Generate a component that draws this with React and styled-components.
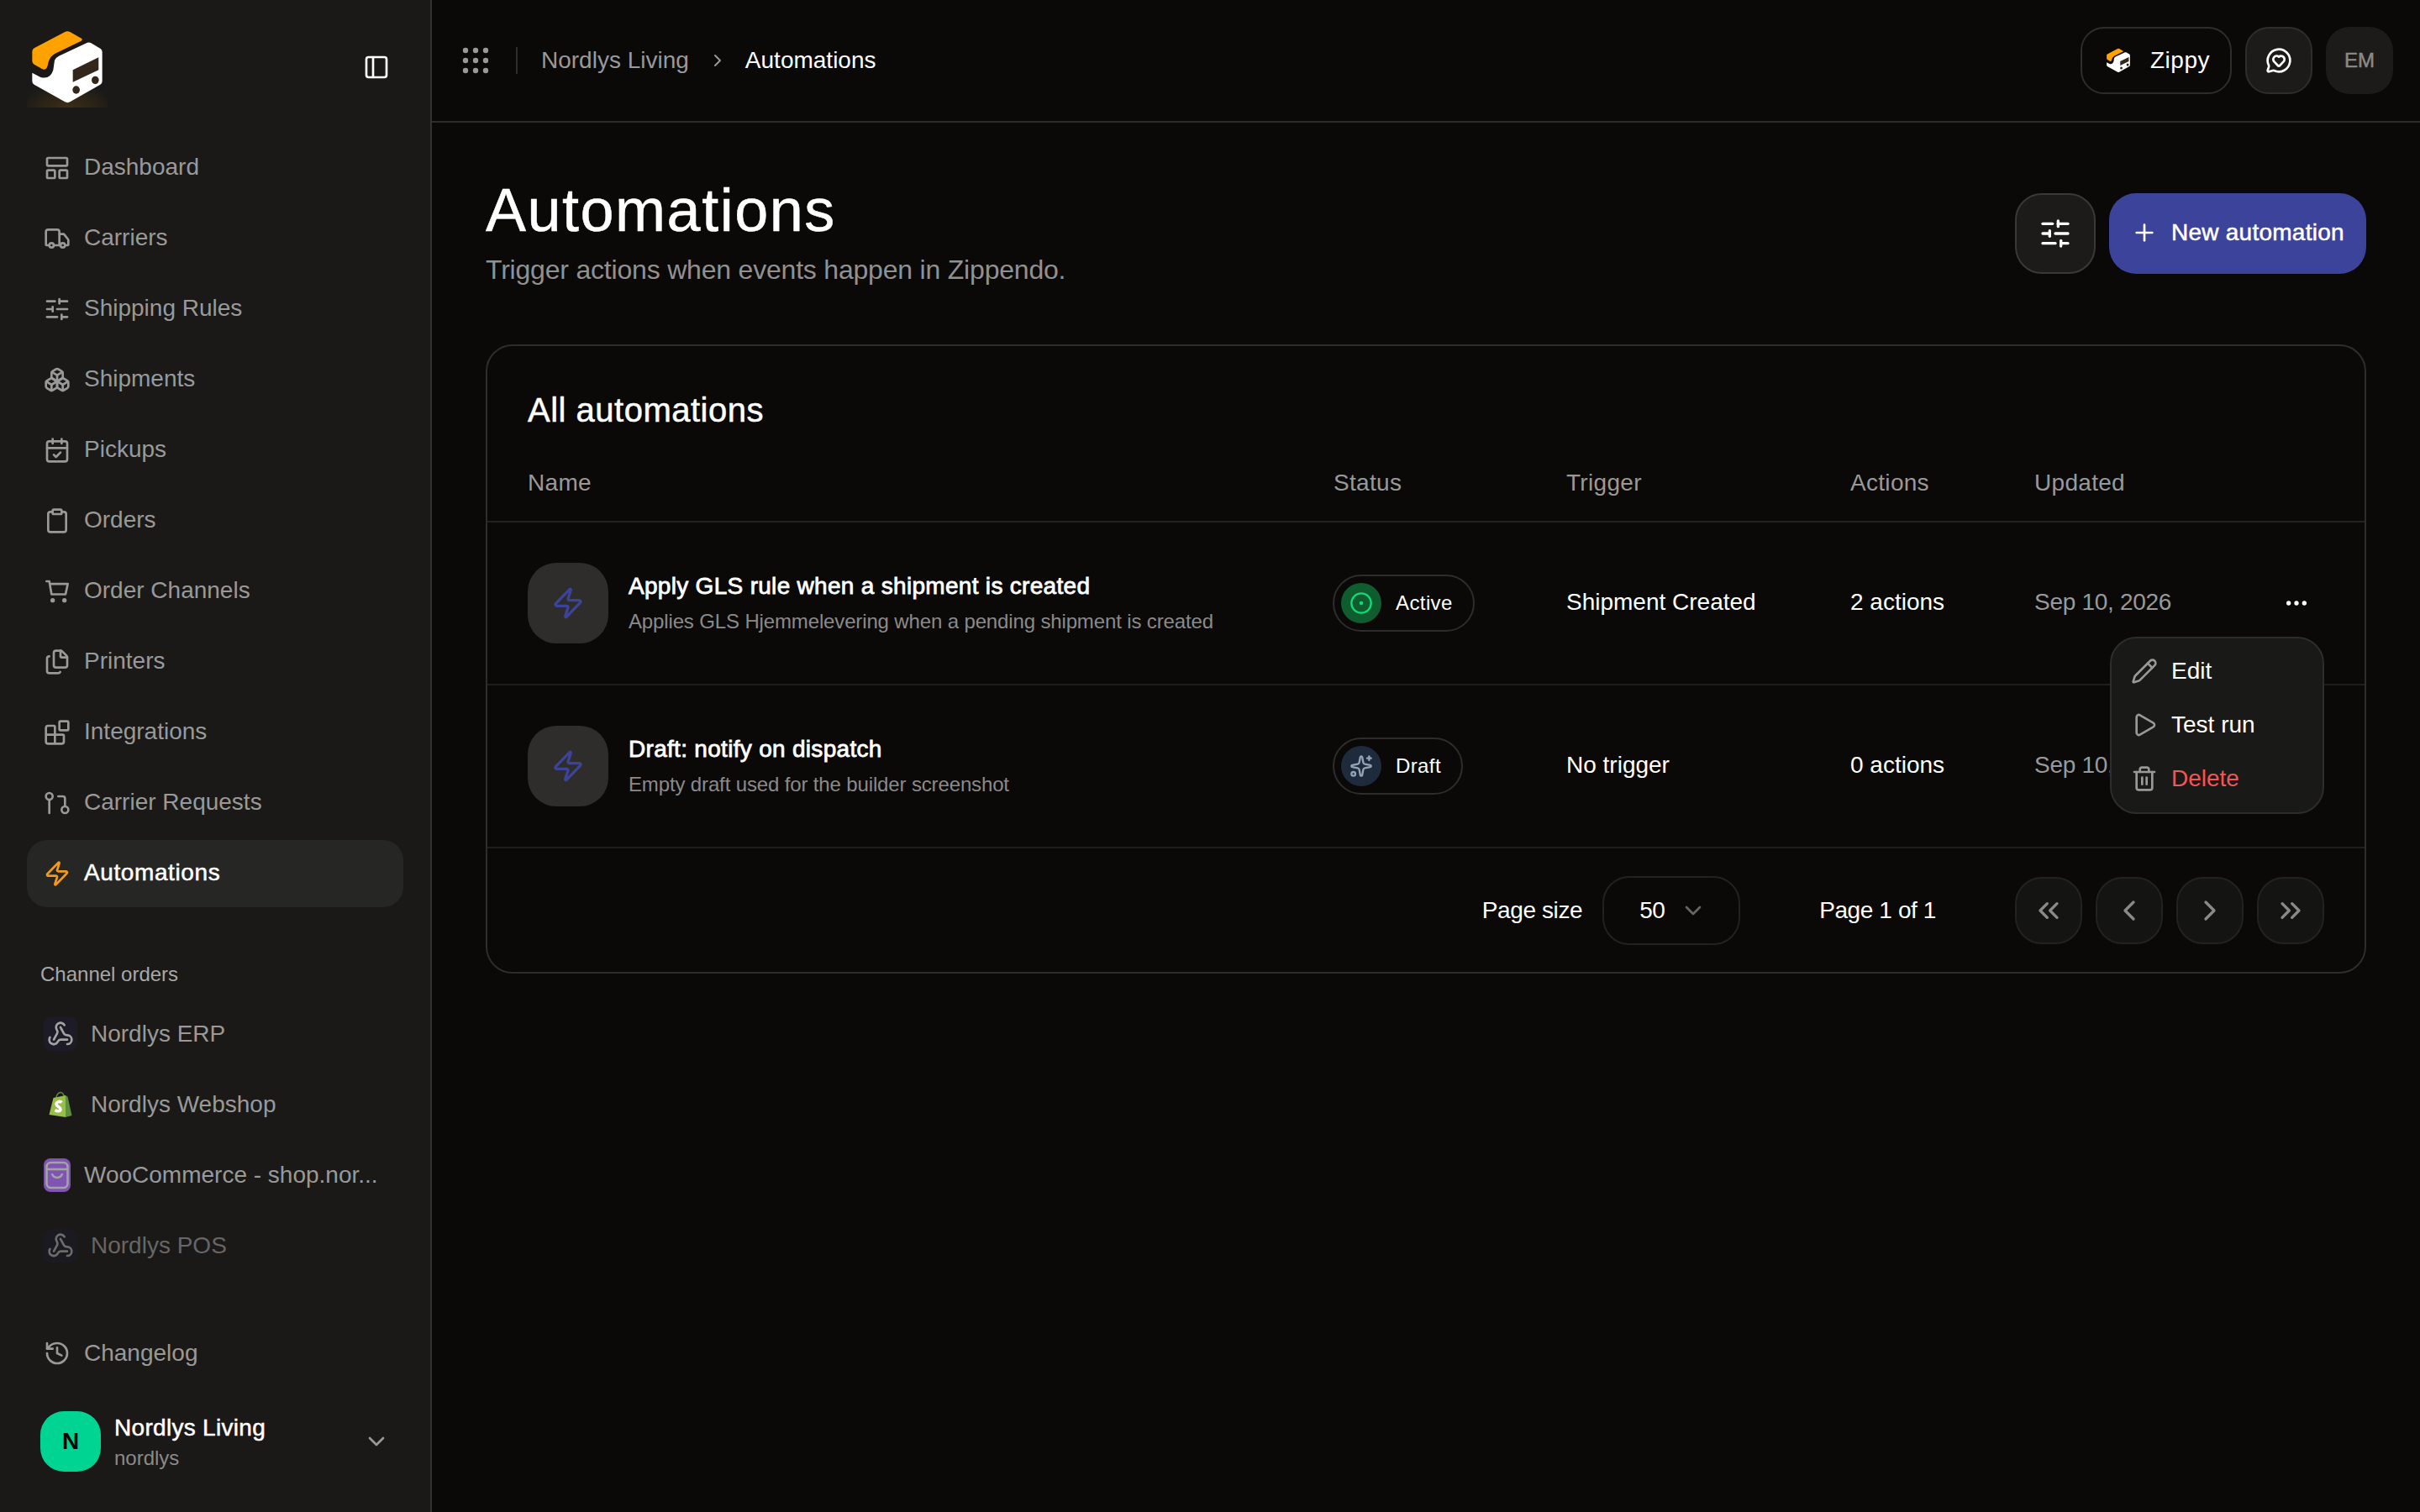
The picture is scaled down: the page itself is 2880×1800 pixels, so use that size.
import styled, { createGlobalStyle, css } from "styled-components";
import {
  Blocks,
  Boxes,
  CalendarCheck,
  ChevronDown,
  ChevronLeft,
  ChevronRight,
  ChevronsLeft,
  ChevronsRight,
  CircleDot,
  Clipboard,
  Ellipsis,
  Files,
  History,
  LayoutPanelTop,
  MessageCircleHeart,
  PanelLeft,
  Pencil,
  Play,
  Plus,
  SlidersHorizontal,
  Sparkles,
  Trash2,
  Truck,
  Webhook,
  Zap,
} from "lucide-react";

const GlobalStyle = createGlobalStyle`
  * { box-sizing: border-box; }
  html, body { margin: 0; padding: 0; background: #0a0908; }
  body {
    font-family: "Liberation Sans", Arial, sans-serif;
    color: #fff;
    -webkit-font-smoothing: antialiased;
  }
`;

const medium = css`
  -webkit-text-stroke: 0.5px currentColor;
`;

const Layout = styled.div`
  display: flex;
  width: 2880px;
  height: 1800px;
  overflow: hidden;
`;

const Sidebar = styled.aside`
  width: 514px;
  flex: none;
  display: flex;
  flex-direction: column;
  background: #1a1918;
  border-right: 2px solid #333231;
  padding-bottom: 48px;
`;

const SideTop = styled.div`
  height: 160px;
  flex: none;
  display: flex;
  align-items: flex-start;
  justify-content: space-between;
  padding: 32px 48px 0 32px;
`;

const LogoBox = styled.div`
  width: ${(p) => p.$size}px;
  height: ${(p) => p.$size}px;
  flex: none;
  ${(p) =>
    p.$glow &&
    css`
      background: radial-gradient(ellipse 60% 30% at 50% 100%, rgba(245, 158, 11, 0.16), transparent);
    `}
  svg {
    display: block;
    width: 100%;
    height: 100%;
  }
`;

const Collapse = styled.div`
  height: 96px;
  display: flex;
  align-items: center;
  color: #fff;
`;

const NavList = styled.nav`
  display: flex;
  flex-direction: column;
  gap: 4px;
  padding: 0 32px;
`;

const NavItem = styled.div`
  height: 80px;
  display: flex;
  align-items: center;
  gap: 16px;
  padding-left: 20px;
  border-radius: 24px;
  font-size: 28px;
  color: ${(p) => (p.$active ? "#fff" : "#999")};
  background: ${(p) => (p.$active ? "#262625" : "transparent")};
  opacity: ${(p) => (p.$dim ? 0.6 : 1)};
  ${(p) =>
    p.$active &&
    css`
      ${medium}
      letter-spacing: 0.6px;
    `}
  svg {
    flex: none;
    color: ${(p) => (p.$active ? "#f59a16" : "#999")};
  }
`;

const NavLabel = styled.span`
  margin-bottom: 2px;
`;

const SectionLabel = styled.div`
  margin: 64px 0 15px 48px;
  font-size: 24px;
  line-height: 32px;
  color: #a8a8a8;
`;

const ChannelBadge = styled.div`
  width: ${(p) => p.$w || 40}px;
  height: 40px;
  flex: none;
  display: flex;
  align-items: center;
  justify-content: center;
  border-radius: 8px;
  background: ${(p) => p.$bg || "transparent"};
  svg {
    color: #a3a3a3;
  }
`;

const SideBottom = styled.div`
  margin-top: auto;
`;

const Account = styled.div`
  display: flex;
  align-items: center;
  gap: 16px;
  margin-top: 29px;
  padding: 0 48px;
`;

const Avatar = styled.div`
  width: 72px;
  height: 72px;
  flex: none;
  display: flex;
  align-items: center;
  justify-content: center;
  border-radius: 28px;
  background: #00d492;
  color: #0a0908;
  font-size: 28px;
  font-weight: 700;
`;

const AccountText = styled.div`
  flex: 1;
`;

const AccountName = styled.div`
  font-size: 28px;
  line-height: 40px;
  letter-spacing: 0.3px;
  ${medium}
`;

const AccountSlug = styled.div`
  font-size: 24px;
  line-height: 32px;
  color: #8a8a8a;
`;

const Main = styled.main`
  flex: 1;
  min-width: 0;
  display: flex;
  flex-direction: column;
`;

const TopBar = styled.header`
  height: 146px;
  flex: none;
  display: flex;
  align-items: center;
  padding: 0 32px 0 36px;
  border-bottom: 2px solid #2e2d2b;
`;

const Crumbs = styled.div`
  display: flex;
  align-items: center;
  font-size: 28px;
  color: #999;
  svg {
    color: #999;
  }
`;

const CrumbDivider = styled.span`
  width: 2px;
  height: 32px;
  margin: 0 28px 0 32px;
  background: #2e2d2b;
`;

const CrumbCurrent = styled.span`
  color: #fff;
  margin-left: 21px;
`;

const CrumbSep = styled.span`
  display: flex;
  margin-left: 22px;
`;

const TopActions = styled.div`
  margin-left: auto;
  display: flex;
  gap: 16px;
`;

const ZippyButton = styled.div`
  height: 80px;
  width: 180px;
  display: flex;
  align-items: center;
  justify-content: center;
  gap: 22px;
  padding-left: 3px;
  border: 2px solid #2e2d2b;
  border-radius: 28px;
  font-size: 28px;
  letter-spacing: 0.5px;
`;

const SquareButton = styled.div`
  width: 80px;
  height: 80px;
  display: flex;
  align-items: center;
  justify-content: center;
  border-radius: 28px;
  background: #1c1b1a;
  border: 2px solid ${(p) => (p.$plain ? "transparent" : "#2e2d2b")};
  color: ${(p) => (p.$plain ? "#8a8a8a" : "#fff")};
  font-size: 24px;
  ${(p) => p.$plain && medium}
`;

const Page = styled.div`
  padding: 64px;
`;

const PageHead = styled.div`
  display: flex;
  align-items: center;
  justify-content: space-between;
  margin-bottom: 66px;
`;

const PageTitle = styled.h1`
  margin: 0;
  font-size: 72px;
  line-height: 80px;
  font-weight: 400;
  letter-spacing: 1.5px;
  ${medium}
`;

const PageSub = styled.p`
  margin: 9px 0 1px;
  font-size: 32px;
  line-height: 44px;
  letter-spacing: -0.2px;
  color: #919191;
`;

const HeadActions = styled.div`
  display: flex;
  gap: 16px;
  padding-top: 2px;
`;

const FilterButton = styled.div`
  width: 96px;
  height: 96px;
  display: flex;
  align-items: center;
  justify-content: center;
  border-radius: 32px;
  background: #1c1b1a;
  border: 2px solid #3a3937;
`;

const PrimaryButton = styled.div`
  width: 306px;
  height: 96px;
  display: flex;
  align-items: center;
  gap: 16px;
  padding: 0 0 2px 26px;
  border-radius: 32px;
  background: #3c439b;
  font-size: 28px;
  letter-spacing: 0.25px;
  ${medium}
`;

const Card = styled.section`
  position: relative;
  height: 749px;
  border: 2px solid #2e2d2b;
  border-radius: 32px;
`;

const CardTitle = styled.h2`
  margin: 0;
  height: 118px;
  padding: 48px 48px 0;
  font-size: 40px;
  line-height: 56px;
  font-weight: 400;
  letter-spacing: 0.5px;
  ${medium}
`;

const columns = css`
  display: grid;
  grid-template-columns: 959px 277px 338px 219px 1fr 66px;
  align-items: center;
  padding: 0 48px;
`;

const TableHead = styled.div`
  ${columns}
  height: 92px;
  border-bottom: 2px solid #232220;
  font-size: 28px;
  letter-spacing: 0.3px;
  color: #999;
`;

const Row = styled.div`
  ${columns}
  height: 194px;
  border-bottom: 2px solid #1f1e1d;
  font-size: 28px;
`;

const Cell = styled.div`
  margin-bottom: 2px;
`;

const NameCell = styled.div`
  display: flex;
  align-items: center;
  gap: 24px;
`;

const RowIcon = styled.div`
  width: 96px;
  height: 96px;
  display: flex;
  align-items: center;
  justify-content: center;
  border-radius: 34px;
  background: #2e2d2b;
  color: #3c439b;
`;

const RowTitle = styled.div`
  font-size: 28px;
  line-height: 40px;
  letter-spacing: 0.3px;
  -webkit-text-stroke: 0.8px currentColor;
`;

const RowSub = styled.div`
  margin-top: 4px;
  font-size: 24px;
  line-height: 36px;
  letter-spacing: -0.14px;
  color: #8a8a8a;
`;

const StatusPill = styled.div`
  width: fit-content;
  height: 68px;
  margin-left: -1px;
  display: flex;
  align-items: center;
  gap: 17px;
  padding: 0 24px 0 8px;
  border: 2px solid #2e2d2b;
  border-radius: 34px;
  font-size: 24px;
  letter-spacing: 0.4px;
`;

const StatusDot = styled.div`
  width: 48px;
  height: 48px;
  display: flex;
  align-items: center;
  justify-content: center;
  border-radius: 50%;
  background: ${(p) => p.$bg};
  color: ${(p) => p.$fg};
`;

const DateCell = styled.div`
  margin-bottom: 2px;
  letter-spacing: -0.3px;
  color: #999;
`;

const MoreCell = styled.div`
  display: flex;
  justify-content: center;
  color: #fff;
`;

const ActionMenu = styled.div`
  position: absolute;
  top: 346px;
  right: 48px;
  width: 255px;
  height: 211px;
  padding: 7px 0 8px 23px;
  background: #191918;
  border: 2px solid #2e2d2b;
  border-radius: 32px;
`;

const MenuItem = styled.div`
  height: 64px;
  display: flex;
  align-items: center;
  gap: 16px;
  font-size: 28px;
  color: ${(p) => (p.$danger ? "#f2555a" : "#fff")};
  svg {
    color: #999;
  }
`;

const Pager = styled.div`
  height: 147px;
  display: flex;
  align-items: center;
  justify-content: flex-end;
  padding-right: 48px;
  font-size: 28px;
  letter-spacing: -0.4px;
`;

const SizeSelect = styled.div`
  width: 164px;
  height: 82px;
  margin: 0 94px 0 24px;
  display: flex;
  align-items: center;
  gap: 17px;
  padding-left: 42px;
  border: 2px solid #232220;
  border-radius: 32px;
  svg {
    color: #666;
  }
`;

const PagerButtons = styled.div`
  display: flex;
  gap: 16px;
  margin-left: 94px;
`;

const PagerButton = styled.div`
  width: 80px;
  height: 80px;
  display: flex;
  align-items: center;
  justify-content: center;
  border-radius: 32px;
  background: #141413;
  border: 2px solid #232220;
  color: #8a8a8a;
`;

function LogoMark({ size, glow }) {
  return (
    <LogoBox $size={size} $glow={glow}>
      <svg viewBox="36 36 288 288">
        <path
          d="M172 54Q180 50 190 54L232 78Q236 82 230 86L140 130Q118 140 112 165Q108 195 90 186L62 170Q55 165 55 158L55 124Q55 116 62 112Z"
          fill="#ffa200"
        />
        <path
          d="M252 92Q258 90 264 93L298 113Q305 117 305 125L305 230Q305 238 298 242L190 304Q181 309 172 304L62 242Q55 238 55 230L55 200L85 216Q120 225 130 190L135 155Q140 145 150 140Z"
          fill="#fff"
        />
        <path d="M200 190L292 145L292 190L200 233Z" fill="#33261a" />
        <ellipse cx="212" cy="261" rx="13" ry="14" fill="#33261a" />
        <ellipse cx="280" cy="226" rx="13" ry="14" fill="#33261a" />
      </svg>
    </LogoBox>
  );
}

function GripDots() {
  const spots = [4, 16, 28];
  return (
    <svg width="32" height="32" viewBox="0 0 32 32" fill="#999">
      {spots.map((y) => spots.map((x) => <circle key={`${x}-${y}`} cx={x} cy={y} r="3.200" />))}
    </svg>
  );
}

function CartIcon({ size }) {
  return (
    <svg width={size} height={size} viewBox="0 0 24 24" fill="none" stroke="currentColor" strokeWidth="2" strokeLinecap="round" strokeLinejoin="round">
      <path d="M2.500 3H5L7 14.600H19.500L21.500 5.300H5.500" />
      <circle cx="8" cy="20" r="1" />
      <circle cx="18.500" cy="20" r="1" />
    </svg>
  );
}

function CarrierRequests({ size }) {
  return (
    <svg width={size} height={size} viewBox="0 0 24 24" fill="none" stroke="currentColor" strokeWidth="2" strokeLinecap="round">
      <circle cx="5" cy="6" r="3" />
      <path d="M5 9v12" />
      <circle cx="19" cy="18" r="3" />
      <path d="M13 6h4a2 2 0 0 1 2 2v7" />
    </svg>
  );
}

function ShopifyBag() {
  return (
    <svg width="32" height="32" viewBox="0 0 32 32">
      <path d="M11 8C11 4 14 1.500 16 1.500S20 4 21 8" fill="none" stroke="#5e8e3e" strokeWidth="1.400" />
      <path d="M2.500 28L7.500 8L22 5L22 31Z" fill="#95bf47" />
      <path d="M22 5L24.500 6.500L29.500 29L22 31Z" fill="#5e8e3e" />
      <path
        d="M17.500 13.500C15.500 11.500 11 12.500 11 15.500C11 18.500 16 18.500 16 21.500C16 24 12.500 24.500 9.500 22.500"
        fill="none"
        stroke="#fff"
        strokeWidth="3.600"
      />
    </svg>
  );
}

function WooBag() {
  return (
    <svg width="32" height="40" viewBox="0 0 32 40" fill="none" stroke="#a3a3a3" strokeWidth="2.600">
      <rect x="3.500" y="5" width="25" height="30" rx="5" />
      <path d="M3.500 13h25" />
      <path d="M10 18a6 5 0 0 0 12 0" />
    </svg>
  );
}

const navItems = [
  ["Dashboard", LayoutPanelTop],
  ["Carriers", Truck],
  ["Shipping Rules", SlidersHorizontal],
  ["Shipments", Boxes],
  ["Pickups", CalendarCheck],
  ["Orders", Clipboard],
  ["Order Channels", CartIcon],
  ["Printers", Files],
  ["Integrations", Blocks],
  ["Carrier Requests", CarrierRequests],
  ["Automations", Zap],
];

const automations = [
  {
    title: "Apply GLS rule when a shipment is created",
    sub: "Applies GLS Hjemmelevering when a pending shipment is created",
    status: "Active",
    trigger: "Shipment Created",
    actions: "2 actions",
  },
  {
    title: "Draft: notify on dispatch",
    sub: "Empty draft used for the builder screenshot",
    status: "Draft",
    trigger: "No trigger",
    actions: "0 actions",
  },
];

export default function App() {
  return (
    <>
      <GlobalStyle />
      <Layout>
        <Sidebar>
          <SideTop>
            <LogoMark size={96} glow />
            <Collapse>
              <PanelLeft size={32} />
            </Collapse>
          </SideTop>
          <NavList>
            {navItems.map(([label, Icon]) => (
              <NavItem key={label} $active={label === "Automations"}>
                <Icon size={32} />
                <NavLabel>{label}</NavLabel>
              </NavItem>
            ))}
          </NavList>
          <SectionLabel>Channel orders</SectionLabel>
          <NavList>
            <NavItem>
              <ChannelBadge $bg="#1c1b26">
                <Webhook size={32} />
              </ChannelBadge>
              Nordlys ERP
            </NavItem>
            <NavItem>
              <ChannelBadge>
                <ShopifyBag />
              </ChannelBadge>
              Nordlys Webshop
            </NavItem>
            <NavItem>
              <ChannelBadge $w={32} $bg="#7f54b3">
                <WooBag />
              </ChannelBadge>
              WooCommerce - shop.nor...
            </NavItem>
            <NavItem $dim>
              <ChannelBadge $bg="#1c1b26">
                <Webhook size={32} />
              </ChannelBadge>
              Nordlys POS
            </NavItem>
          </NavList>
          <SideBottom>
            <NavList>
              <NavItem>
                <History size={32} />
                Changelog
              </NavItem>
            </NavList>
            <Account>
              <Avatar>N</Avatar>
              <AccountText>
                <AccountName>Nordlys Living</AccountName>
                <AccountSlug>nordlys</AccountSlug>
              </AccountText>
              <ChevronDown size={32} color="#999" />
            </Account>
          </SideBottom>
        </Sidebar>

        <Main>
          <TopBar>
            <Crumbs>
              <GripDots />
              <CrumbDivider />
              Nordlys Living
              <CrumbSep>
                <ChevronRight size={24} />
              </CrumbSep>
              <CrumbCurrent>Automations</CrumbCurrent>
            </Crumbs>
            <TopActions>
              <ZippyButton>
                <LogoMark size={32} />
                Zippy
              </ZippyButton>
              <SquareButton>
                <MessageCircleHeart size={32} />
              </SquareButton>
              <SquareButton $plain>EM</SquareButton>
            </TopActions>
          </TopBar>

          <Page>
            <PageHead>
              <div>
                <PageTitle>Automations</PageTitle>
                <PageSub>Trigger actions when events happen in Zippendo.</PageSub>
              </div>
              <HeadActions>
                <FilterButton>
                  <SlidersHorizontal size={40} />
                </FilterButton>
                <PrimaryButton>
                  <Plus size={32} />
                  New automation
                </PrimaryButton>
              </HeadActions>
            </PageHead>

            <Card>
              <CardTitle>All automations</CardTitle>
              <TableHead>
                <div>Name</div>
                <div>Status</div>
                <div>Trigger</div>
                <div>Actions</div>
                <div>Updated</div>
              </TableHead>
              {automations.map((a) => (
                <Row key={a.title}>
                  <NameCell>
                    <RowIcon>
                      <Zap size={40} />
                    </RowIcon>
                    <div>
                      <RowTitle>{a.title}</RowTitle>
                      <RowSub>{a.sub}</RowSub>
                    </div>
                  </NameCell>
                  <StatusPill>
                    {a.status === "Active" ? (
                      <StatusDot $bg="#0f5c2e" $fg="#10d977">
                        <CircleDot size={28} />
                      </StatusDot>
                    ) : (
                      <StatusDot $bg="#1e2b3d" $fg="#94a3b8">
                        <Sparkles size={28} />
                      </StatusDot>
                    )}
                    {a.status}
                  </StatusPill>
                  <Cell>{a.trigger}</Cell>
                  <Cell>{a.actions}</Cell>
                  <DateCell>Sep 10, 2026</DateCell>
                  <MoreCell>
                    <Ellipsis size={32} />
                  </MoreCell>
                </Row>
              ))}
              <Pager>
                Page size
                <SizeSelect>
                  50
                  <ChevronDown size={32} />
                </SizeSelect>
                Page 1 of 1
                <PagerButtons>
                  <PagerButton>
                    <ChevronsLeft size={40} />
                  </PagerButton>
                  <PagerButton>
                    <ChevronLeft size={40} />
                  </PagerButton>
                  <PagerButton>
                    <ChevronRight size={40} />
                  </PagerButton>
                  <PagerButton>
                    <ChevronsRight size={40} />
                  </PagerButton>
                </PagerButtons>
              </Pager>
              <ActionMenu>
                <MenuItem>
                  <Pencil size={32} />
                  Edit
                </MenuItem>
                <MenuItem>
                  <Play size={32} />
                  Test run
                </MenuItem>
                <MenuItem $danger>
                  <Trash2 size={32} />
                  Delete
                </MenuItem>
              </ActionMenu>
            </Card>
          </Page>
        </Main>
      </Layout>
    </>
  );
}
